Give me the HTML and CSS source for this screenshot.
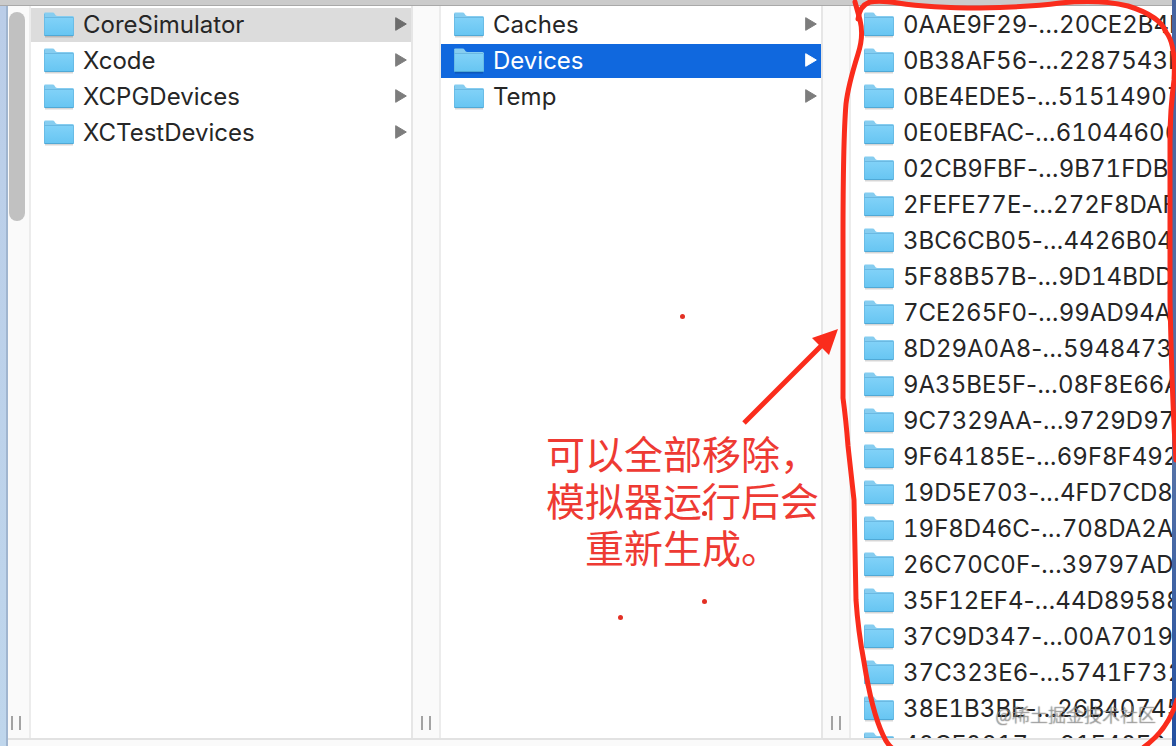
FILE: index.html
```
<!DOCTYPE html>
<html lang="zh-CN">

<head>
    <meta charset="UTF-8">
    <meta name="viewport" content="width=device-width, initial-scale=1.0">
    <title>CoreSimulator</title>
    <link rel="stylesheet" href="styles.css">
</head>

<body>

    <!-- shared icons -->
    <svg class="defs" aria-hidden="true">
        <linearGradient id="folderFill" x1="0" y1="0" x2="0" y2="1">
            <stop offset="0" stop-color="#82d2f8"/>
            <stop offset="1" stop-color="#66c5f2"/>
        </linearGradient>
        <symbol id="folder" viewBox="0 0 30 26">
            <path d="M1 24.5h28" stroke="#000" stroke-opacity=".16" stroke-width="2"/>
            <path d="M0 22V2Q0 .6 1.4 .6H8.500Q10 .6 10.800 2L11.600 3.300Q12.200 4 13.500 4H28.500Q30 4 30 5.500V22Z" fill="#86cdf0"/>
            <path d="M0 6Q0 5 1 5H29Q30 5 30 6V22.500Q30 24 28.500 24H1.500Q0 24 0 22.500Z" fill="url(#folderFill)"/>
            <path d="M.5 5.500H29.500" stroke="#6bb9e2"/>
            <path d="M.5 23.500H29.500" stroke="#50a9d6"/>
            <path d="M.5 2V23M29.500 6V23" stroke="#64b5df" stroke-opacity=".7"/>
        </symbol>
        <symbol id="arrow" viewBox="0 0 12 14">
            <path d="M.7 .7L11.300 7L.7 13.300Z" fill="currentColor" stroke="currentColor" stroke-linejoin="round"/>
        </symbol>
    </svg>

    <div class="screen">
        <main class="window">
            <div class="titlebar"></div>
            <div class="browser">
                <div class="desktop-left"></div>
                <div class="gutter gutter-first">
                    <div class="scrollbar"></div>
                    <div class="grip"></div>
                </div>

                <ul class="column">
                    <li><a class="row current" href="#"><svg class="folder"><use href="#folder"/></svg><span class="name">CoreSimulator</span><svg class="arrow"><use href="#arrow"/></svg></a></li>
                    <li><a class="row" href="#"><svg class="folder"><use href="#folder"/></svg><span class="name">Xcode</span><svg class="arrow"><use href="#arrow"/></svg></a></li>
                    <li><a class="row" href="#"><svg class="folder"><use href="#folder"/></svg><span class="name">XCPGDevices</span><svg class="arrow"><use href="#arrow"/></svg></a></li>
                    <li><a class="row" href="#"><svg class="folder"><use href="#folder"/></svg><span class="name">XCTestDevices</span><svg class="arrow"><use href="#arrow"/></svg></a></li>
                </ul>
                <div class="gutter"><div class="grip"></div></div>

                <ul class="column">
                    <li><a class="row" href="#"><svg class="folder"><use href="#folder"/></svg><span class="name">Caches</span><svg class="arrow"><use href="#arrow"/></svg></a></li>
                    <li><a class="row selected" href="#"><svg class="folder"><use href="#folder"/></svg><span class="name">Devices</span><svg class="arrow"><use href="#arrow"/></svg></a></li>
                    <li><a class="row" href="#"><svg class="folder"><use href="#folder"/></svg><span class="name">Temp</span><svg class="arrow"><use href="#arrow"/></svg></a></li>
                </ul>
                <div class="gutter"><div class="grip"></div></div>

                <ul class="column column-last">
                    <li><a class="row" href="#"><svg class="folder"><use href="#folder"/></svg><span class="name">0AAE9F29<span class="dots">-...</span>20CE2B4F</span></a></li>
                    <li><a class="row" href="#"><svg class="folder"><use href="#folder"/></svg><span class="name">0B38AF56<span class="dots">-...</span>2287543E</span></a></li>
                    <li><a class="row" href="#"><svg class="folder"><use href="#folder"/></svg><span class="name">0BE4EDE5<span class="dots">-...</span>51514907</span></a></li>
                    <li><a class="row" href="#"><svg class="folder"><use href="#folder"/></svg><span class="name">0E0EBFAC<span class="dots">-...</span>61044606</span></a></li>
                    <li><a class="row" href="#"><svg class="folder"><use href="#folder"/></svg><span class="name">02CB9FBF<span class="dots">-...</span>9B71FDBE</span></a></li>
                    <li><a class="row" href="#"><svg class="folder"><use href="#folder"/></svg><span class="name">2FEFE77E<span class="dots">-...</span>272F8DAF</span></a></li>
                    <li><a class="row" href="#"><svg class="folder"><use href="#folder"/></svg><span class="name">3BC6CB05<span class="dots">-...</span>4426B04</span></a></li>
                    <li><a class="row" href="#"><svg class="folder"><use href="#folder"/></svg><span class="name">5F88B57B<span class="dots">-...</span>9D14BDD</span></a></li>
                    <li><a class="row" href="#"><svg class="folder"><use href="#folder"/></svg><span class="name">7CE265F0<span class="dots">-...</span>99AD94A</span></a></li>
                    <li><a class="row" href="#"><svg class="folder"><use href="#folder"/></svg><span class="name">8D29A0A8<span class="dots">-...</span>5948473</span></a></li>
                    <li><a class="row" href="#"><svg class="folder"><use href="#folder"/></svg><span class="name">9A35BE5F<span class="dots">-...</span>08F8E66A</span></a></li>
                    <li><a class="row" href="#"><svg class="folder"><use href="#folder"/></svg><span class="name">9C7329AA<span class="dots">-...</span>9729D97</span></a></li>
                    <li><a class="row" href="#"><svg class="folder"><use href="#folder"/></svg><span class="name">9F64185E<span class="dots">-...</span>69F8F492</span></a></li>
                    <li><a class="row" href="#"><svg class="folder"><use href="#folder"/></svg><span class="name">19D5E703<span class="dots">-...</span>4FD7CD8</span></a></li>
                    <li><a class="row" href="#"><svg class="folder"><use href="#folder"/></svg><span class="name">19F8D46C<span class="dots">-...</span>708DA2A</span></a></li>
                    <li><a class="row" href="#"><svg class="folder"><use href="#folder"/></svg><span class="name">26C70C0F<span class="dots">-...</span>39797AD</span></a></li>
                    <li><a class="row" href="#"><svg class="folder"><use href="#folder"/></svg><span class="name">35F12EF4<span class="dots">-...</span>44D89588</span></a></li>
                    <li><a class="row" href="#"><svg class="folder"><use href="#folder"/></svg><span class="name">37C9D347<span class="dots">-...</span>00A7019</span></a></li>
                    <li><a class="row" href="#"><svg class="folder"><use href="#folder"/></svg><span class="name">37C323E6<span class="dots">-...</span>5741F732</span></a></li>
                    <li><a class="row" href="#"><svg class="folder"><use href="#folder"/></svg><span class="name">38E1B3BE<span class="dots">-...</span>26B40745</span></a></li>
                    <li><a class="row" href="#"><svg class="folder"><use href="#folder"/></svg><span class="name">40CF0217<span class="dots">-...</span>91F40F24</span></a></li>
                </ul>
            </div>
            <div class="statusbar"></div>
        </main>
        <div class="desktop-right"></div>

        <!-- hand drawn marks -->
        <svg class="marks" viewBox="0 0 1176 746" aria-hidden="true">
            <g fill="none" stroke="#fa2c1c" stroke-width="5" stroke-linecap="round" stroke-linejoin="round">
                <path d="M855 2L860 20Q864 36 858 54Q848 86 846 104Q843 140 843 240V398Q846 420 848 446L854 500L856 600Q858 630 864 662Q872 712 883 735Q887 744 892 748"/>
                <path d="M858 19Q860 5 870 2Q880 0 898 3Q930 8 980 8Q1030 7 1060 3Q1100 -1 1128 6Q1160 16 1166 32Q1176 44 1174 80Q1170 110 1170 140V300Q1172 400 1176 460"/>
                <path d="M1177 700Q1168 730 1144 747"/>
                <path d="M744 423L823 344" stroke-linecap="butt"/>
            </g>
            <path d="M838 329L812 338L829 355Z" fill="#fa2c1c"/>
            <g fill="#e33024">
                <circle cx="682.5" cy="316.5" r="2.5"/>
                <circle cx="704.5" cy="513.5" r="2.5"/>
                <circle cx="704.5" cy="601.5" r="2.5"/>
                <circle cx="620.5" cy="617.5" r="2.5"/>
            </g>
        </svg>
        <p class="note">可以全部移除，<br>模拟器运行后会<br>重新生成。</p>
        <p class="watermark">@稀土掘金技术社区</p>
    </div>

</body>
</html>
```
FILE: styles.css
```
* {
    box-sizing: border-box;
}

body {
    margin: 0;
    font-family: Inter, "Noto Sans CJK SC", sans-serif;
    font-size: 24px;
    color: #262626;
    background-color: #ffffff;
}

.defs {
    position: absolute;
    width: 0;
    height: 0;
}

.screen {
    position: relative;
    display: flex;
    height: 100vh;
    overflow: hidden;
}

.window {
    flex: 1;
    min-width: 0;
    display: flex;
    flex-direction: column;
}

.titlebar {
    height: 6px;
    background-color: #cbcbcb;
    border-bottom: 1px solid #a9a9a9;
}

.browser {
    flex: 1;
    min-height: 0;
    display: flex;
}

.desktop-left {
    width: 8px;
    background: linear-gradient(#bacde8, #bfd6ec);
    border-right: 2px solid #a0b5cf;
    margin-bottom: -8px;
}

.desktop-right {
    width: 4px;
    background: linear-gradient(#4664a0, #5874a8 60%, #2450a0);
}

.gutter {
    flex: none;
    width: 30px;
    display: flex;
    flex-direction: column;
    justify-content: flex-end;
    align-items: center;
    padding-bottom: 8px;
    background-color: #fafafa;
    border-left: 2px solid #e6e6e6;
    border-right: 2px solid #ececec;
}

.gutter-first {
    width: 23px;
    justify-content: space-between;
    align-items: flex-start;
    padding: 6px 1px 8px;
    border-left: none;
}

.gutter-first .grip {
    margin-left: 2px;
}

.scrollbar {
    width: 16px;
    height: 209px;
    border-radius: 8px;
    background-color: #c1c1c1;
}

.grip {
    width: 10px;
    height: 14px;
    border-left: 2px solid #a3a3a3;
    border-right: 2px solid #a3a3a3;
}

.column {
    flex: 380 1 0;
    min-width: 0;
    margin: 0;
    padding: 2px 0 0;
    list-style: none;
    overflow: hidden;
}

.column-last {
    flex-grow: 321;
    font-variant-numeric: tabular-nums;
}

.dots {
    font-variant-numeric: normal;
}

.row {
    display: flex;
    align-items: center;
    gap: 9px;
    height: 34px;
    margin-bottom: 2px;
    padding: 0 4px 0 13px;
    color: #262626;
    text-decoration: none;
}

.name {
    flex: 1;
    padding-bottom: 1px;
    line-height: 32px;
    white-space: nowrap;
}

.folder {
    flex: none;
    width: 30px;
    height: 26px;
}

.arrow {
    flex: none;
    width: 12px;
    height: 14px;
    margin-bottom: 2px;
    color: #7d7d7d;
}

.current {
    background-color: #dcdcdc;
}

.current .arrow {
    color: #6c6c6c;
}

.selected,
.selected .arrow {
    color: #ffffff;
}

.selected {
    background-color: #1068de;
}

.statusbar {
    height: 8px;
    margin-left: 8px;
    background-color: #fafafa;
    border-top: 2px solid #e2e2e2;
}

.marks {
    position: absolute;
    top: 0;
    left: 0;
    width: 100%;
}

.note {
    position: absolute;
    top: 429px;
    left: 546px;
    margin: 0;
    font-family: "Noto Sans CJK SC", sans-serif;
    font-size: 39px;
    font-weight: 400;
    line-height: 47px;
    text-align: center;
    color: #ee3a33;
}

.watermark {
    position: absolute;
    right: 20px;
    bottom: 20px;
    margin: 0;
    font-family: "Noto Sans CJK SC", sans-serif;
    font-size: 18px;
    font-weight: 300;
    line-height: 24px;
    color: rgba(255, 255, 255, 0.5);
    text-shadow: 0 0 1px rgba(0, 0, 0, 0.9);
}
```
